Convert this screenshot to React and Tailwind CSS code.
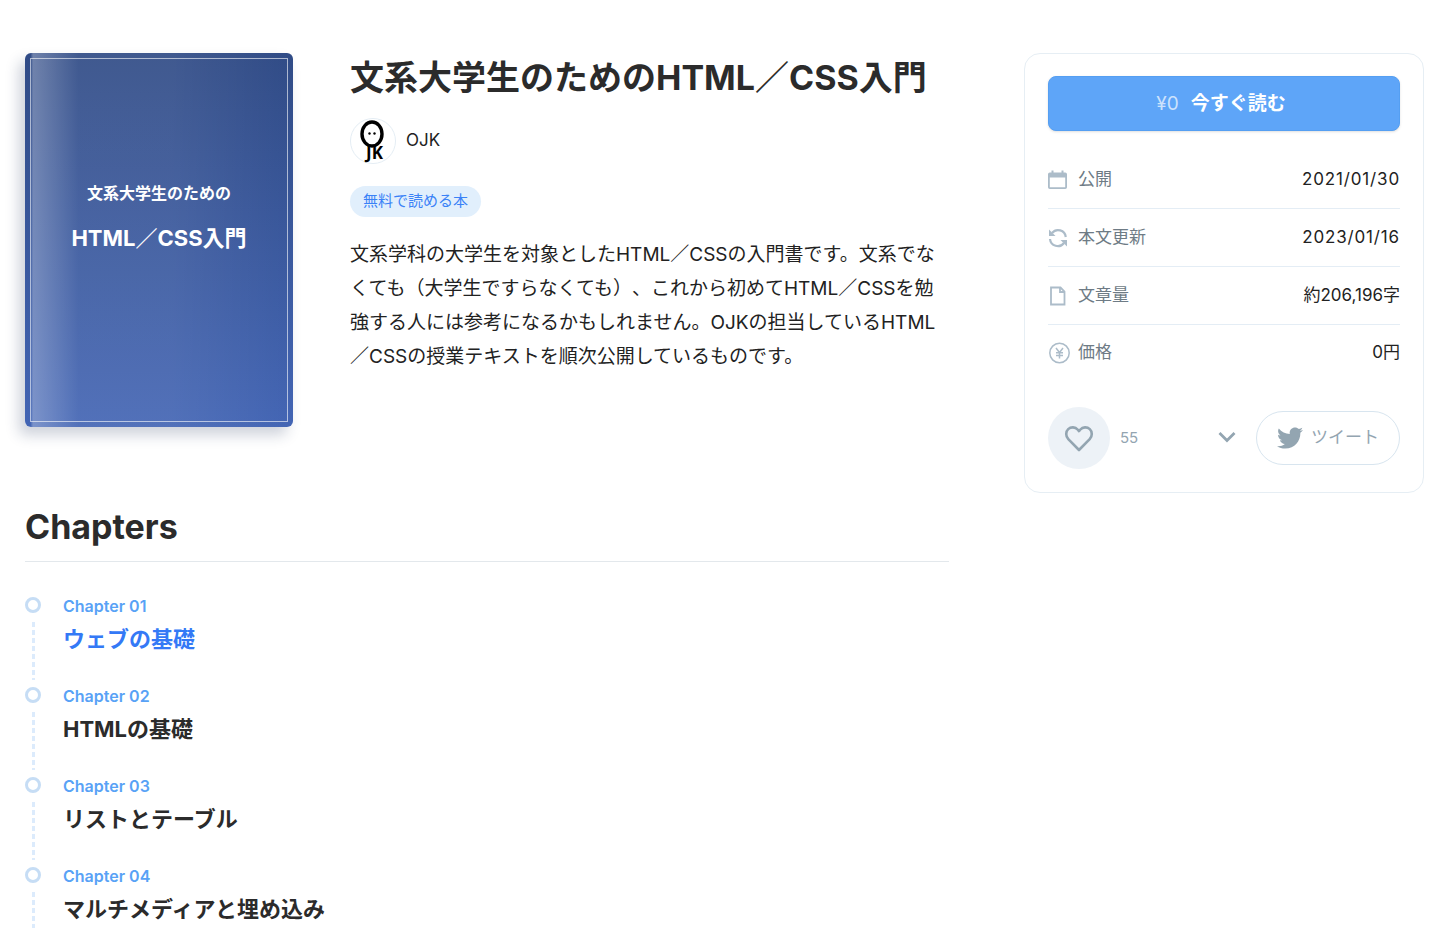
import { FaTwitter } from 'react-icons/fa'

const chapters = [
  { label: 'Chapter 01', title: 'ウェブの基礎', active: true },
  { label: 'Chapter 02', title: 'HTMLの基礎' },
  { label: 'Chapter 03', title: 'リストとテーブル' },
  { label: 'Chapter 04', title: 'マルチメディアと埋め込み' },
]

function CalendarIcon() {
  return (
    <svg width="20" height="20" viewBox="0 0 20 20" fill="#acbcc9" aria-hidden="true">
      <path
        fillRule="evenodd"
        d="M3.500 0.500h2v2h8v-2h2v2h1.700A1.800 1.800 0 0 1 19 4.300V17.200A1.800 1.800 0 0 1 17.200 19H1.800A1.800 1.800 0 0 1 0 17.200V4.300A1.800 1.800 0 0 1 1.800 2.500H3.500V0.500ZM1.800 7.500v9.700h15.400V7.500h-15.400Z"
      />
    </svg>
  )
}

function UpdateIcon() {
  return (
    <svg width="20" height="20" viewBox="0 0 20 20" fill="none" stroke="#acbcc9" strokeWidth="2.200" aria-hidden="true">
      <path d="M4 5A7.800 7.800 0 0 1 17.800 9" />
      <path d="M2 11A7.800 7.800 0 0 0 16 15" />
      <path d="M1 1.500v6.500h6.500Z" fill="#acbcc9" stroke="none" />
      <path d="M19 18.500v-6.500h-6.500Z" fill="#acbcc9" stroke="none" />
    </svg>
  )
}

function FileIcon() {
  return (
    <svg width="20" height="20" viewBox="0 0 20 20" fill="none" stroke="#acbcc9" strokeWidth="1.800" aria-hidden="true">
      <path d="M3 1.500h9.500l4 4v13H3Z" />
      <path d="M12 1.500v4.500h4.500" />
    </svg>
  )
}

function YenIcon() {
  return (
    <svg width="22" height="22" viewBox="0 0 22 22" fill="none" stroke="#acbcc9" strokeWidth="1.500" aria-hidden="true">
      <circle cx="11.500" cy="11" r="9.700" />
      <path d="M8 6 11.500 10.500l3.500-4.500M11.500 10.500V16.500M8 10.800h7M8 13.500h7" />
    </svg>
  )
}

const details = [
  { icon: CalendarIcon, label: '公開', value: '2021/01/30', date: true },
  { icon: UpdateIcon, label: '本文更新', value: '2023/01/16', date: true },
  { icon: FileIcon, label: '文章量', value: '約206,196字' },
  { icon: YenIcon, label: '価格', value: '0円' },
]

function Avatar() {
  return (
    <svg width="46" height="46" viewBox="0 0 46 46" aria-hidden="true">
      <circle cx="23" cy="23" r="22.500" fill="#fff" stroke="#e4edf4" />
      <ellipse cx="22" cy="16" rx="10" ry="12" fill="none" stroke="#000" strokeWidth="3.400" />
      <circle cx="19.500" cy="15.500" r="1.200" />
      <circle cx="24.500" cy="15.500" r="1.200" />
      <text x="16" y="41" fontSize="17" fontWeight="700" fontFamily="'Noto Sans', sans-serif">JK</text>
    </svg>
  )
}

function BookCover() {
  return (
    <div className="relative flex h-[374px] w-[268px] flex-col items-center overflow-hidden rounded-md bg-linear-to-b from-[#304b86] to-[#4365b4] text-white">
      <div className="absolute inset-0 bg-[linear-gradient(to_right,transparent_2%,rgba(255,255,255,0.3)_3%,rgba(255,255,255,0.08)_20%,rgba(255,255,255,0.08)_55%,transparent)]" />
      <div className="absolute inset-[5px] border border-white/60" />
      <p className="relative mt-[127px] font-['Noto_Sans_CJK_JP',sans-serif] text-base leading-6 font-bold">文系大学生のための</p>
      <p className="relative mt-[18px] text-[22px] leading-8 font-bold">HTML／CSS入門</p>
    </div>
  )
}

function Chapter({ label, title, active }) {
  return (
    <li className="flex gap-[22px]">
      <div className="flex w-4 shrink-0 flex-col items-center pt-[3px]">
        <span className="size-4 shrink-0 rounded-full border-3 border-[#c6ddf5]" />
        <span className="mt-[9px] mb-1 w-[3px] flex-1 bg-[repeating-linear-gradient(to_bottom,#dcebfc_0_5px,transparent_5px_8px)]" />
      </div>
      <a href="#" className="block pb-7">
        <span className="block text-base leading-6 font-semibold text-[#58a2f6]">{label}</span>
        <span className={`mt-1 block text-[22px] leading-[34px] font-bold ${active ? 'text-[#3479f6]' : 'text-[#2b2b2b]'}`}>
          {title}
        </span>
      </a>
    </li>
  )
}

function Sidebar() {
  return (
    <aside className="w-[400px] shrink-0 rounded-2xl border border-[#e6eef4] px-[23px] pt-[22px] pb-[23px]">
      <button className="flex h-[55px] w-full items-center justify-center gap-3 rounded-lg border border-[#559ff2] bg-[#5ea5f8] pt-0.5 pr-1.5 text-[19px] text-white shadow-sm">
        <span className="text-white/70">¥0</span>
        <span className="font-bold">今すぐ読む</span>
      </button>
      <dl className="mt-5">
        {details.map(({ icon: Icon, label, value, date }) => (
          <div key={label} className="flex h-[58px] items-center justify-between border-b border-[#e4edf5] text-[17px] last:h-[55px] last:border-b-0">
            <dt className="flex items-center text-[#6e7b85]">
              <span className="flex w-[30px]"><Icon /></span>
              {label}
            </dt>
            <dd className={`text-[#222] ${date ? 'tracking-wider' : ''}`}>{value}</dd>
          </div>
        ))}
      </dl>
      <div className="mt-[27px] flex items-center">
        <button aria-label="いいね" className="flex size-[62px] items-center justify-center rounded-full bg-[#edf2f7]">
          <svg width="30" height="28" viewBox="0 0 30 28" fill="none" stroke="#93a5b1" strokeWidth="2.600" strokeLinejoin="round" aria-hidden="true">
            <path d="M15 26 4.300 15.100C1.500 12.200 1.600 7.500 4.200 5.100c2.700-2.500 7.100-2.300 9.400.4L15 7.100l1.400-1.600c2.300-2.700 6.700-2.900 9.400-.4 2.600 2.400 2.700 7.100-.1 10Z" />
          </svg>
        </button>
        <span className="ml-[10px] text-[15px] text-[#93a5b1]">55</span>
        <button aria-label="共有メニュー" className="mr-5 ml-auto">
          <svg width="18" height="12" viewBox="0 0 18 12" fill="none" stroke="#93a5b1" strokeWidth="2.800" aria-hidden="true">
            <path d="m1.500 1 7.500 7.500 7.500-7.500" />
          </svg>
        </button>
        <a href="#" className="flex h-[54px] w-36 items-center justify-center gap-2 rounded-full border border-[#d8e5ef] text-[17px] text-[#93a5b1]">
          <FaTwitter className="size-[26px]" aria-hidden="true" />
          ツイート
        </a>
      </div>
    </aside>
  )
}

export default function App() {
  return (
    <div className="flex min-h-screen items-start gap-[75px] bg-white pt-[53px] pr-4 pl-[25px] font-['Inter','Noto_Sans_CJK_JP',sans-serif] text-[#222] [text-spacing-trim:space-all]" lang="ja">
      <main className="min-w-0 flex-1">
        <div className="flex gap-[57px]">
          <div className="shrink-0 rounded-md shadow-[-6px_8px_14px_rgba(30,50,90,0.22)]">
            <BookCover />
          </div>
          <div className="min-w-0 flex-1 pr-2">
            <h1 className="text-[34px] leading-[50px] font-bold text-[#2b2b2b]">文系大学生のためのHTML／CSS入門</h1>
            <a href="#" className="mt-[15px] flex items-center gap-[10px] text-[17px]">
              <Avatar />
              OJK
            </a>
            <a href="#" className="mt-[22px] flex h-[31px] w-fit items-center rounded-full bg-[#e1effc] px-[13px] text-[15px] text-[#3a82f7]">
              無料で読める本
            </a>
            <p className="mt-[21px] text-[19px] leading-[34px]">
              文系学科の大学生を対象としたHTML／CSSの入門書です。文系でなくても（大学生ですらなくても）、これから初めてHTML／CSSを勉強する人には参考になるかもしれません。OJKの担当しているHTML／CSSの授業テキストを順次公開しているものです。
            </p>
          </div>
        </div>
        <h2 className="mt-[74px] border-b border-[#e3e8ec] pb-[9px] text-[34px] leading-[51px] font-bold text-[#2b2b2b]">Chapters</h2>
        <ol className="mt-8">
          {chapters.map((chapter) => (
            <Chapter key={chapter.label} {...chapter} />
          ))}
        </ol>
      </main>
      <Sidebar />
    </div>
  )
}
